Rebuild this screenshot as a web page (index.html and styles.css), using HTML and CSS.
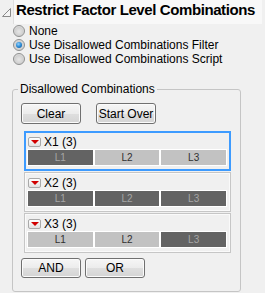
FILE: index.html
```html
<!DOCTYPE html>
<html lang="en">
<head>
    <meta charset="UTF-8">
    <title>Restrict Factor Level Combinations</title>
    <link rel="stylesheet" href="styles.css">
</head>
<body>
    <div class="outline">
        <div class="outline-head">
            <svg class="disclosure" width="10" height="10" viewBox="0 0 10 10">
                <polygon points="8.5,0.5 8.5,8.5 0.5,8.5" fill="#f4f4f4" stroke="#8a8a8a" stroke-width="1"/>
            </svg>
            <div class="outline-title">Restrict Factor Level Combinations</div>
        </div>

        <!-- Restriction mode -->
        <div class="choices">
            <label class="choice"><span class="radio"></span>None</label>
            <label class="choice"><span class="radio checked"></span>Use Disallowed Combinations Filter</label>
            <label class="choice"><span class="radio"></span>Use Disallowed Combinations Script</label>
        </div>

        <fieldset class="group">
            <legend>Disallowed Combinations</legend>
            <div class="btn-row wide">
                <button type="button" class="btn">Clear</button>
                <button type="button" class="btn">Start Over</button>
            </div>

            <!-- One box per factor, levels as toggles -->
            <div class="factors">
                <div class="factor active">
                    <div class="factor-head"><span class="menu-btn"><span class="caret"></span></span>X1 (3)</div>
                    <div class="levels">
                        <span class="level on">L1</span>
                        <span class="level">L2</span>
                        <span class="level">L3</span>
                    </div>
                </div>
                <div class="factor">
                    <div class="factor-head"><span class="menu-btn"><span class="caret"></span></span>X2 (3)</div>
                    <div class="levels">
                        <span class="level on">L1</span>
                        <span class="level on">L2</span>
                        <span class="level on">L3</span>
                    </div>
                </div>
                <div class="factor">
                    <div class="factor-head"><span class="menu-btn"><span class="caret"></span></span>X3 (3)</div>
                    <div class="levels">
                        <span class="level">L1</span>
                        <span class="level">L2</span>
                        <span class="level on">L3</span>
                    </div>
                </div>
            </div>

            <div class="btn-row tight">
                <button type="button" class="btn short">AND</button>
                <button type="button" class="btn short">OR</button>
            </div>
        </fieldset>
    </div>
</body>
</html>
```

FILE: styles.css
```css
/* Plain dialog look */
body {
    margin: 0;
    background: #f0f0f0;
    font-family: 'Liberation Sans', Arial, sans-serif;
    font-size: 12px;
    color: #000;
}
/* Outline box header */
.outline-head {
    display: flex;
    height: 24px;
}
.disclosure {
    margin: 8px 1px 0 2px;
}
.outline-title {
    flex: 1;
    margin-right: 3px;
    padding-left: 2px;
    background: #f8f8f8;
    border-left: 1px solid #dedede;
    font-size: 15px;
    font-weight: bold;
    letter-spacing: -0.4px;
    line-height: 20px;
    white-space: nowrap;
}
/* Radio choices */
.choices {
    padding-left: 13px;
}
.choice {
    display: flex;
    align-items: center;
    gap: 4px;
    height: 14px;
}
.radio {
    display: flex;
    align-items: center;
    justify-content: center;
    box-sizing: border-box;
    width: 12px;
    height: 12px;
    border: 1px solid #8e8f8f;
    border-radius: 50%;
    background: radial-gradient(circle at 50% 55%, #e6e6e6 0%, #d0d0d0 55%, #f4f4f4 100%);
}
.radio.checked::after {
    content: "";
    width: 6px;
    height: 6px;
    border-radius: 50%;
    background: radial-gradient(circle at 40% 35%, #8fd0ff 0%, #2a8ad4 50%, #134f8f 100%);
}
/* Group box */
.group {
    box-sizing: border-box;
    width: 229px;
    min-width: 0;
    margin: 16px 0 0 12px;
    padding: 7px 0 13px 8px;
    border: 1px solid #c5c5c5;
    border-radius: 3px;
}
.group legend {
    margin-left: -3px;
    padding: 0 2px;
    line-height: 14px;
}
.btn-row {
    display: flex;
}
.btn-row.wide {
    gap: 15px;
}
.btn-row.tight {
    gap: 4px;
    margin-top: 5px;
}
.btn {
    width: 60px;
    height: 21px;
    padding: 0;
    border: 1px solid #707070;
    border-radius: 3px;
    background: linear-gradient(#f6f6f6, #ececec 50%, #dfdfdf 50%, #d4d4d4);
    box-shadow: inset 0 0 0 1px #fbfbfb;
    font-family: inherit;
    font-size: 12px;
    color: #000;
}
.btn.short {
    height: 20px;
}
/* Factor boxes */
.factors {
    margin: 7px 0 0 3px;
    width: 207px;
}
.factor {
    box-sizing: border-box;
    height: 40px;
    margin-bottom: 1px;
    padding: 3px 3px 3px 2px;
    border: 1px solid #c6c6c6;
    box-shadow: inset 0 0 0 1px #fafafa;
}
.factor.active {
    border-color: #3d9bff;
    box-shadow: inset 0 0 0 1px #3d9bff;
}
.factor-head {
    display: flex;
    align-items: center;
    height: 14px;
    padding-left: 1px;
}
.menu-btn {
    display: flex;
    align-items: center;
    justify-content: center;
    box-sizing: border-box;
    width: 13px;
    height: 10px;
    margin-right: 3px;
    border: 1px solid #a9a9a9;
    border-radius: 2px;
    background: linear-gradient(#ffffff, #e2e2e2);
}
.caret {
    width: 0;
    height: 0;
    border-left: 4px solid transparent;
    border-right: 4px solid transparent;
    border-top: 4px solid #d10000;
}
.levels {
    display: flex;
    gap: 2px;
    padding: 1px;
    background: #fff;
}
.level {
    flex: 1;
    height: 15px;
    background: #c2c2c2;
    color: #303030;
    font-size: 10px;
    line-height: 15px;
    text-align: center;
}
.level.on {
    background: #636363;
    color: #a6a6a6;
}
```
